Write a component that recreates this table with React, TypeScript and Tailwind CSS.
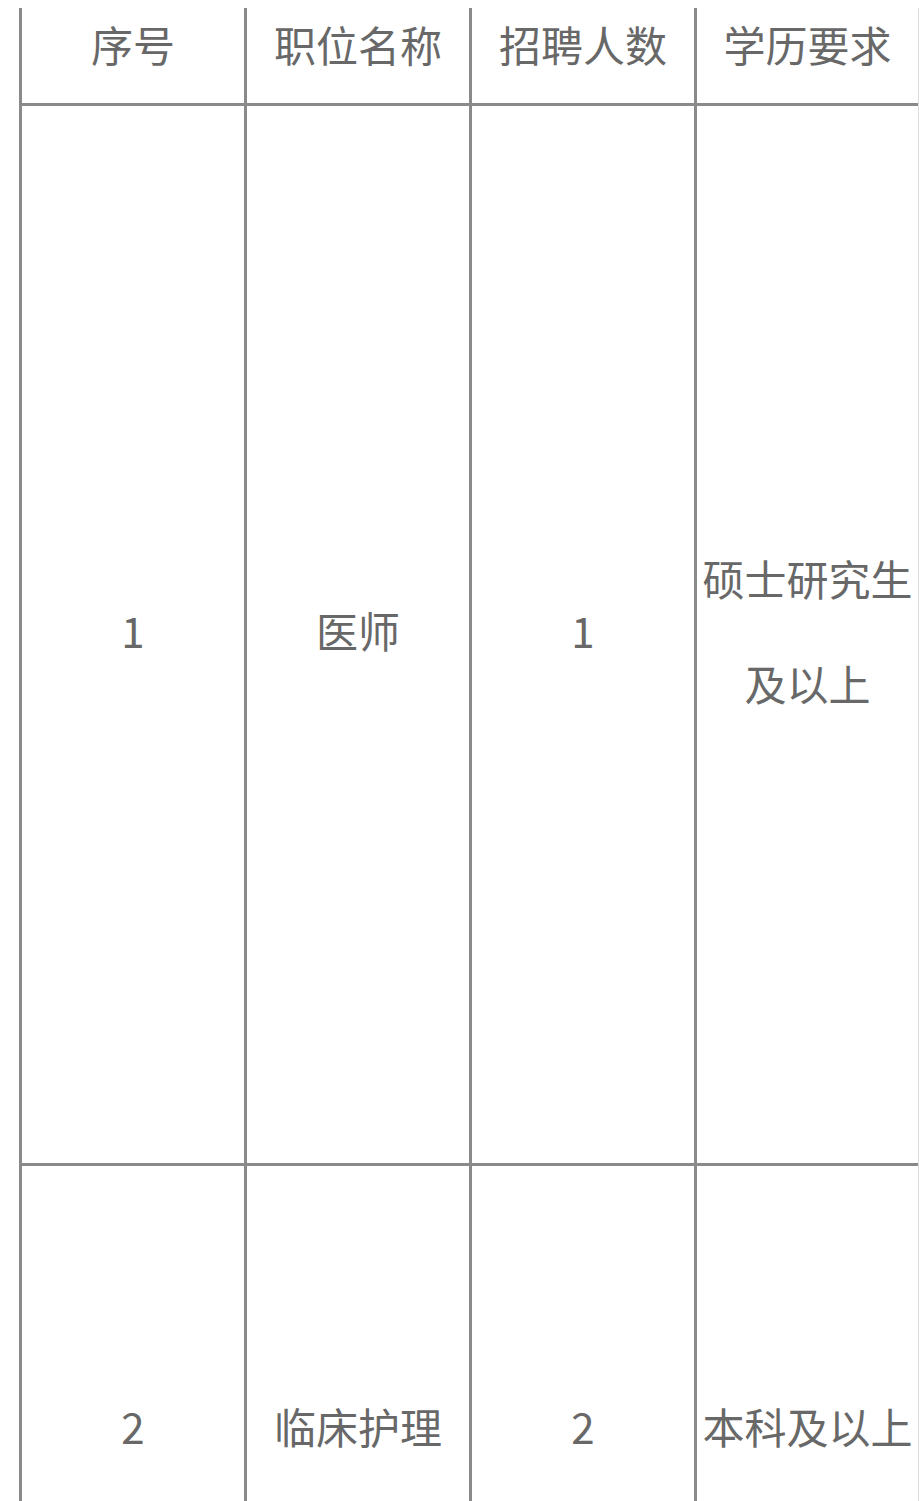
import React from "react";

const font = { fontFamily: '"Noto Sans CJK SC", "Noto Sans", sans-serif' };

export default function App() {
  const cell =
    "flex justify-center border-l-[3px] border-[#8a8a8a] text-[42px] text-[#686868]";
  return (
    <div className="bg-white w-[919px] h-[1501px] overflow-hidden pt-[8px] pl-[19px]" style={font}>
      <div className="flex flex-col w-[900px] border-r border-[#dcdcdc]">
        {/* header */}
        <div className="flex border-b-[3px] border-[#8a8a8a]">
          {["序号", "职位名称", "招聘人数", "学历要求"].map((t, i) => (
            <div
              key={i}
              className={`${cell} ${i === 3 ? "w-[224px]" : "w-[225px]"} h-[95px] items-start leading-[72px]`}
            >
              {t}
            </div>
          ))}
        </div>
        {/* row 1 */}
        <div className="flex border-b-[3px] border-[#8a8a8a]">
          <div className={`${cell} w-[225px] h-[1057px] items-center leading-[54px] pb-[9px]`}>1</div>
          <div className={`${cell} w-[225px] h-[1057px] items-center leading-[54px] pb-[9px]`}>医师</div>
          <div className={`${cell} w-[225px] h-[1057px] items-center leading-[54px] pb-[9px]`}>1</div>
          <div className={`${cell} w-[224px] h-[1057px] items-center leading-[105px] text-center pb-[9px]`}>
            <span>硕士研究生及以上</span>
          </div>
        </div>
        {/* row 2 */}
        <div className="flex border-b-[3px] border-[#8a8a8a]">
          <div className={`${cell} w-[225px] h-[524px] items-center leading-[54px] pb-[5px]`}>2</div>
          <div className={`${cell} w-[225px] h-[524px] items-center leading-[54px] pb-[5px]`}>临床护理</div>
          <div className={`${cell} w-[225px] h-[524px] items-center leading-[54px] pb-[5px]`}>2</div>
          <div className={`${cell} w-[224px] h-[524px] items-center leading-[54px] text-center pb-[5px]`}>本科及以上</div>
        </div>
      </div>
    </div>
  );
}
